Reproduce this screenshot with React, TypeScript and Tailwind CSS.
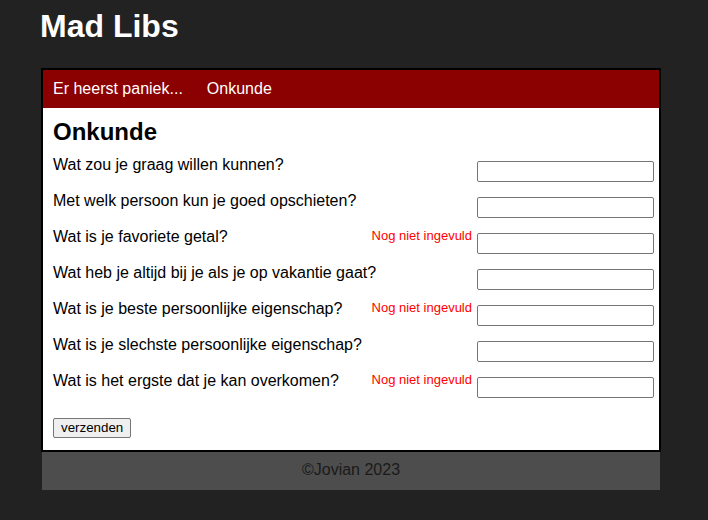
import React from "react";

type Question = { label: string; missing?: boolean };

const questions: Question[] = [
  { label: "Wat zou je graag willen kunnen?" },
  { label: "Met welk persoon kun je goed opschieten?" },
  { label: "Wat is je favoriete getal?", missing: true },
  { label: "Wat heb je altijd bij je als je op vakantie gaat?" },
  { label: "Wat is je beste persoonlijke eigenschap?", missing: true },
  { label: "Wat is je slechste persoonlijke eigenschap?" },
  { label: "Wat is het ergste dat je kan overkomen?", missing: true },
];

function QuestionRow({ label, missing }: Question) {
  return (
    <div className="flex h-[36px] items-start justify-between">
      <label className="text-[16px] leading-[18px] text-black">{label}</label>
      <div className="flex items-start gap-[5px]">
        {missing ? (
          <span className="text-[13px] leading-[15px] text-[#ff0000]">Nog niet ingevuld</span>
        ) : null}
        <input
          type="text"
          className="mt-[5px] h-[21px] w-[177px] rounded-[2px] border border-[#767676] bg-white px-[2px] text-[13px] outline-none"
        />
      </div>
    </div>
  );
}

export default function App() {
  return (
    <div
      className="min-h-screen bg-[#222222] pl-[40px]"
      style={{ fontFamily: '"Liberation Sans", Arial, sans-serif' }}
    >
      <h1 className="pt-[8px] text-[32px] font-bold leading-[37px] text-white">Mad Libs</h1>

      <div className="ml-[1px] mt-[23px] w-[620px] border-2 border-black bg-white">
        <nav className="flex h-[38px] items-center gap-[24px] bg-[#8b0000] px-[10px] text-[16px] text-white">
          <span>Er heerst paniek...</span>
          <span>Onkunde</span>
        </nav>

        <form className="pb-[11px] pl-[10px] pr-[5px] pt-[10px]" onSubmit={(e) => e.preventDefault()}>
          <h2 className="mb-[10px] text-[24px] font-bold leading-[28px] text-black">Onkunde</h2>
          {questions.map((q) => (
            <QuestionRow key={q.label} {...q} />
          ))}
          <button
            type="submit"
            className="mt-[10px] h-[20px] rounded-[2px] border border-[#767676] bg-[#efefef] px-[7px] text-[13.33px] leading-[16px] text-black"
          >
            verzenden
          </button>
        </form>
      </div>

      <footer className="ml-[2px] flex h-[38px] w-[618px] items-center justify-center bg-[#4d4d4d] pb-[2px] text-[16px] text-[#1a1a1a]">
        ©Jovian 2023
      </footer>
    </div>
  );
}
